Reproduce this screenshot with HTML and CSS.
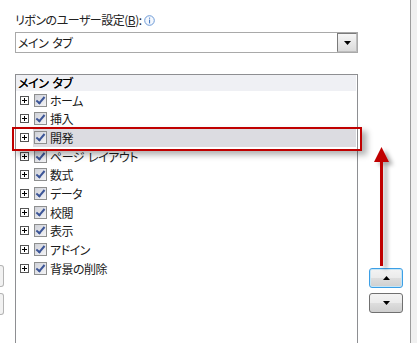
FILE: index.html
```html
<!DOCTYPE html>
<html lang="ja">
<head>
    <meta charset="UTF-8">
    <title>リボンのユーザー設定</title>
    <link rel="stylesheet" href="styles.css">
</head>
<body>
    <div class="page">
        <div class="stub">
            <span class="stub-btn"></span>
            <span class="stub-btn"></span>
        </div>

        <div class="main">
            <div class="caption">
                <span>リボンのユーザー設定(<u>B</u>):</span>
                <svg class="info" width="11" height="11" viewBox="0 0 11 11">
                    <circle cx="5.5" cy="5.5" r="4.8" fill="#f4f8fe" stroke="#6d9ad6" stroke-width="1"/>
                    <rect x="5" y="2.6" width="1.1" height="1.1" fill="#4a7cc4"/>
                    <rect x="5" y="4.6" width="1.1" height="3.8" fill="#4a7cc4"/>
                </svg>
            </div>

            <div class="combo">
                <span class="combo-text">メイン<span class="gap"></span>タブ</span>
                <span class="combo-btn">
                    <svg width="7" height="4" viewBox="0 0 7 4"><polygon points="0,0 7,0 3.5,4" fill="#000"/></svg>
                </span>
            </div>

            <div class="lists">
                <div class="tree">
                    <div class="tree-head">メイン<span class="gap"></span>タブ</div>
                    <ul class="rows">
                        <li class="row"><span class="exp"></span><span class="item"><span class="check"></span>ホーム</span></li>
                        <li class="row"><span class="exp"></span><span class="item"><span class="check"></span>挿入</span></li>
                        <li class="row"><span class="exp"></span><span class="item selected"><span class="check"></span>開発</span></li>
                        <li class="row"><span class="exp"></span><span class="item"><span class="check"></span>ページ<span class="gap"></span>レイアウト</span></li>
                        <li class="row"><span class="exp"></span><span class="item"><span class="check"></span>数式</span></li>
                        <li class="row"><span class="exp"></span><span class="item"><span class="check"></span>データ</span></li>
                        <li class="row"><span class="exp"></span><span class="item"><span class="check"></span>校閲</span></li>
                        <li class="row"><span class="exp"></span><span class="item"><span class="check"></span>表示</span></li>
                        <li class="row"><span class="exp"></span><span class="item"><span class="check"></span>アドイン</span></li>
                        <li class="row"><span class="exp"></span><span class="item"><span class="check"></span>背景の削除</span></li>
                    </ul>
                </div>

                <div class="side">
                    <button class="move focused">
                        <svg width="7" height="4" viewBox="0 0 7 4"><polygon points="0,4 7,4 3.5,0" fill="#000"/></svg>
                    </button>
                    <button class="move">
                        <svg width="7" height="4" viewBox="0 0 7 4"><polygon points="0,0 7,0 3.5,4" fill="#000"/></svg>
                    </button>
                </div>
            </div>
        </div>

        <div class="edge"></div>

        <!-- annotation drawn over the dialog -->
        <div class="callout"></div>
        <svg class="arrow" width="30" height="135" viewBox="0 0 30 135">
            <defs>
                <filter id="shade" x="-50%" y="-20%" width="200%" height="140%">
                    <feDropShadow dx="4" dy="3" stdDeviation="2" flood-color="#000" flood-opacity="0.35"/>
                </filter>
            </defs>
            <g filter="url(#shade)" fill="#c00000">
                <polygon points="11.5,7 4,22 19,22"/>
                <rect x="10" y="21" width="3" height="105"/>
            </g>
        </svg>
    </div>
</body>
</html>
```

FILE: styles.css
```css
*{
    box-sizing: border-box;
}

body{
    margin: 0;
    background: #fff;
    font-family: "Noto Sans CJK JP", "Noto Sans", sans-serif;
    font-size: 12px;
    font-feature-settings: "palt";
    letter-spacing: -0.5px;
    color: #1a1a1a;
}

.page{
    position: relative;
    display: flex;
    width: 417px;
    height: 343px;
    overflow: hidden;
}

/* cut-off buttons of the neighbouring pane */
.stub{
    width: 4px;
    padding-top: 265px;
}

.stub-btn{
    display: block;
    width: 4px;
    height: 22px;
    margin-bottom: 6px;
    border: 1px solid #b4b4b4;
    border-left: none;
    border-radius: 0 3px 3px 0;
    background: #f2f2f2;
}

.main{
    width: 407px;
    padding: 12px 0 0 11px;
    border-right: 1px solid #9c9c9c;
}

.edge{
    flex: 1;
    background: #f0f0f0;
}

.gap{
    display: inline-block;
    width: 4px;
}

.caption{
    display: flex;
    align-items: center;
    height: 16px;
    line-height: 16px;
    color: #222;
}

.info{
    margin-left: 2px;
}

.combo{
    display: flex;
    align-items: center;
    width: 343px;
    height: 21px;
    margin-top: 4px;
    border: 1px solid #a9a9a9;
}

.combo-text{
    flex: 1;
    padding-left: 2px;
}

.combo-btn{
    display: flex;
    align-items: center;
    justify-content: center;
    width: 20px;
    height: 19px;
    border: 1px solid #7a7a7a;
    border-right-color: #bdbdbd;
    border-bottom-color: #bdbdbd;
    background: linear-gradient(#f6f6f6, #dadada);
}

.lists{
    display: flex;
    margin-top: 21px;
}

.tree{
    width: 343px;
    height: 300px;
    padding-right: 1px;
    border: 1px solid #8e8f92;
}

.tree-head{
    height: 16px;
    line-height: 16px;
    padding-left: 2px;
    background: #eff0f4;
    color: #000;
    text-shadow: 0.3px 0 0 #000;
}

.rows{
    margin: 0;
    padding: 0;
    list-style: none;
}

.row{
    display: flex;
    align-items: center;
    height: 18.67px;
}

.exp{
    position: relative;
    width: 9px;
    height: 9px;
    margin-left: 4px;
    border: 1px solid #555;
    background: #fff;
}

.exp::before,
.exp::after{
    content: "";
    position: absolute;
    background: #000;
}

.exp::before{
    left: 1px;
    top: 3px;
    width: 5px;
    height: 1px;
}

.exp::after{
    left: 3px;
    top: 1px;
    width: 1px;
    height: 5px;
}

.item{
    flex: 1;
    display: flex;
    align-items: center;
    height: 100%;
    margin-left: 4px;
    padding-left: 1px;
    white-space: nowrap;
}

.item.selected{
    background: #dcdce1;
}

.check{
    position: relative;
    width: 13px;
    height: 13px;
    margin-right: 3px;
    border: 1px solid #8e8f8f;
    background: linear-gradient(135deg, #cfd1d8, #f4f4f6);
}

.check::after{
    content: "";
    position: absolute;
    left: 3px;
    top: 0;
    width: 3px;
    height: 7px;
    border: solid #3c5597;
    border-width: 0 2px 2px 0;
    transform: rotate(40deg);
}

.side{
    display: flex;
    flex-direction: column;
    padding: 194px 0 0 11px;
}

.move{
    display: flex;
    align-items: center;
    justify-content: center;
    width: 34px;
    height: 20px;
    margin: 0 0 5px;
    padding: 0;
    border: 1px solid #707070;
    border-radius: 3px;
    background: linear-gradient(#f3f3f3 0%, #ebebeb 48%, #dddddd 52%, #cfcfcf 100%);
}

.move.focused{
    border-color: #3c9fe6;
    box-shadow: inset 0 0 0 1px #c4e5f6;
}

.callout{
    position: absolute;
    left: 12px;
    top: 127px;
    width: 350px;
    height: 24px;
    border: 2px solid #c00000;
    box-shadow: 5px 4px 6px rgba(0, 0, 0, 0.3);
}

.arrow{
    position: absolute;
    left: 370px;
    top: 140px;
}
```
